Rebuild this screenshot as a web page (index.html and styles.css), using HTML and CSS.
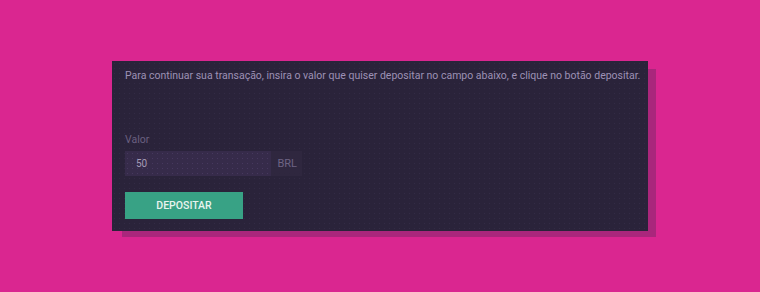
FILE: index.html
```html
<!DOCTYPE html>
<html lang="pt-BR">
<head>
    <meta charset="UTF-8">
    <meta name="viewport" content="width=device-width, initial-scale=1.0">
    <title>Depositar</title>
    <link rel="stylesheet" href="styles.css">
</head>
<body>
    <div class="deposit-card">
        <p class="intro">Para continuar sua transação, insira o valor que quiser depositar no campo abaixo, e clique no botão depositar.</p>

        <div class="form-group">
            <label for="amount">Valor</label>
            <div class="input-group">
                <input type="text" id="amount" value="50">
                <span class="addon">BRL</span>
            </div>
        </div>

        <button class="btn-deposit">Depositar</button>
    </div>
</body>
</html>
```

FILE: styles.css
```css
html, body {
    margin: 0;
    padding: 0;
}
body {
    font-family: Roboto, "Liberation Sans", sans-serif;
    background-color: #da2690;
    height: 292px;
    padding-top: 61px;
    padding-left: 112px;
    box-sizing: border-box;
}
.deposit-card {
    width: 536px;
    height: 170px;
    box-sizing: border-box;
    padding: 7px 13px 12px 13px;
    background-color: #2a233a;
    background-image: radial-gradient(rgba(120, 100, 160, 0.12) 0.6px, transparent 0.8px);
    background-size: 5px 5px;
    box-shadow: 9px 7px 0 -1px rgba(80, 40, 90, 0.35);
}
.intro {
    margin: 0;
    font-size: 10.5px;
    line-height: 16px;
    color: #9d91b5;
    white-space: nowrap;
}
.form-group {
    margin-top: 49px;
}
.form-group label {
    display: block;
    font-size: 10.5px;
    line-height: 14px;
    color: #6a6080;
}
.input-group {
    display: flex;
    width: 177px;
    height: 25px;
    margin-top: 4px;
}
.input-group input {
    flex: 1;
    min-width: 0;
    border: none;
    outline: none;
    padding: 0 11px;
    font-family: inherit;
    font-size: 10px;
    color: #a49bb6;
    background-color: #362b4a;
    background-image: radial-gradient(rgba(150, 120, 190, 0.18) 0.6px, transparent 0.8px);
    background-size: 5px 5px;
}
.input-group .addon {
    display: flex;
    align-items: center;
    padding: 0 5px 0 6px;
    font-size: 11px;
    color: #6e6484;
    background-color: #2f273f;
}
.btn-deposit {
    display: block;
    margin-top: 16px;
    width: 118px;
    height: 27px;
    border: none;
    padding: 0;
    font-family: inherit;
    font-size: 10.5px;
    font-weight: 500;
    text-transform: uppercase;
    color: #e8f4ef;
    background-color: #38a285;
    cursor: pointer;
}
```
